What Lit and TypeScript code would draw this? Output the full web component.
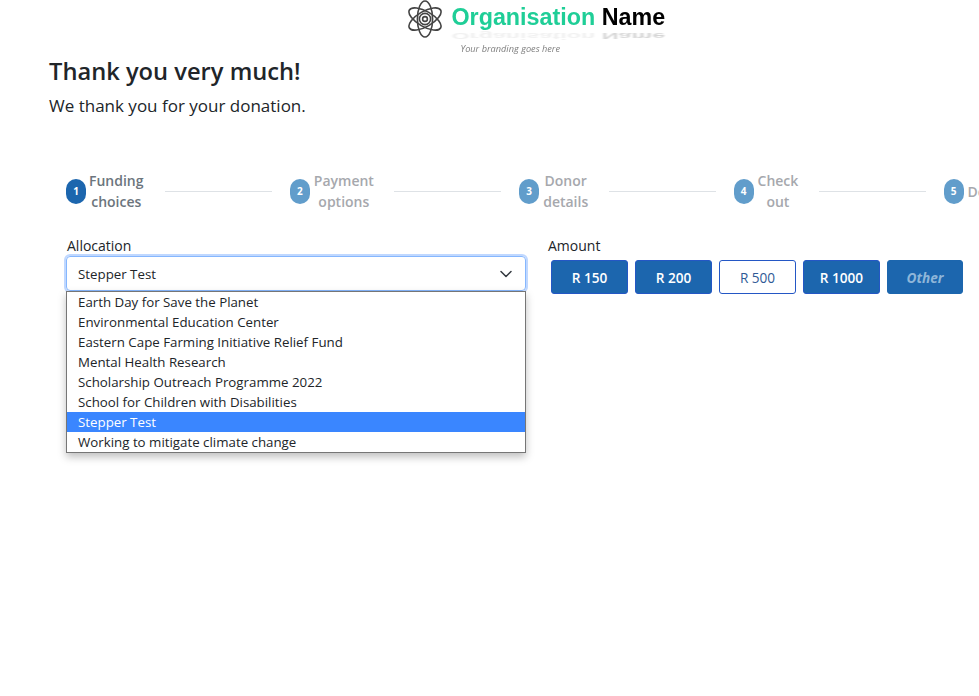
import { LitElement, html, css } from 'lit';
import { customElement } from 'lit/decorators.js';

const STEPS = [
  ['Funding', 'choices'],
  ['Payment', 'options'],
  ['Donor', 'details'],
  ['Check', 'out'],
  ['Done'],
];

const OPTIONS = [
  'Earth Day for Save the Planet',
  'Environmental Education Center',
  'Eastern Cape Farming Initiative Relief Fund',
  'Mental Health Research',
  'Scholarship Outreach Programme 2022',
  'School for Children with Disabilities',
  'Stepper Test',
  'Working to mitigate climate change',
];

const AMOUNTS = ['R 150', 'R 200', 'R 500', 'R 1000'];

@customElement('app-root')
export class AppRoot extends LitElement {
  static styles = css`
    :host {
      display: block;
      width: 979px;
      height: 696px;
      overflow: hidden;
      background: #fff;
      color: #212529;
      font-family: 'Open Sans', 'Noto Sans', sans-serif;
      font-size: 13.3px;
    }

    .brand {
      display: flex;
      justify-content: center;
      height: 56px;
      padding-left: 94px;
      box-sizing: border-box;
    }

    .logo {
      position: relative;
      display: flex;
      width: 258px;
      height: 56px;
      filter: blur(0.3px);
    }

    .atom {
      flex: none;
      width: 34px;
      height: 38px;
    }

    .wordmark {
      margin: 4px 0 0 10px;
      font-family: 'Liberation Sans', Arial, sans-serif;
      font-size: 23.3px;
      font-weight: 700;
      line-height: 27px;
      white-space: nowrap;
      color: #000;
    }

    .wordmark span {
      color: #1fce97;
    }

    .reflection {
      position: absolute;
      left: 34px;
      top: 18px;
      transform: scaleY(-0.4);
      opacity: 0.16;
      filter: blur(1px) grayscale(1);
    }

    .tagline {
      position: absolute;
      left: 53px;
      top: 42px;
      font-size: 9.2px;
      font-style: italic;
      line-height: 13px;
      color: #7f7f7f;
      white-space: nowrap;
    }

    .intro {
      padding-left: 49px;
    }

    h1 {
      margin: 0;
      font-size: 23.7px;
      font-weight: 600;
      line-height: 30px;
    }

    .intro p {
      margin: 6px 0 0;
      font-size: 17px;
      line-height: 27px;
    }

    .stepper {
      display: flex;
      align-items: center;
      margin: 51px 0 0 66px;
      width: 1000px;
    }

    .step {
      display: flex;
      align-items: center;
      flex: none;
    }

    .dot {
      flex: none;
      width: 20px;
      height: 25px;
      border-radius: 10px;
      display: flex;
      align-items: center;
      justify-content: center;
      background: #619dcb;
      color: #fff;
      font-size: 10px;
      font-weight: 700;
    }

    .step.active .dot {
      background: #1c66ae;
    }

    .label {
      margin: 0 -1px 0 4px;
      color: #a6a8ad;
      font-size: 14px;
      font-weight: 600;
      line-height: 21px;
      text-align: center;
    }

    .step.active .label {
      margin: 0 0 0 3px;
      color: #6c757d;
    }

    .rule {
      flex: none;
      width: 106.7px;
      height: 1px;
      margin: 0 18px 0 21.6px;
      background: #dee2e6;
    }

    .form {
      display: flex;
      margin: 23px 0 0 66px;
    }

    .allocation {
      width: 460px;
    }

    .field-label {
      display: block;
      padding-left: 1px;
      font-size: 14px;
      font-weight: 500;
      line-height: 21px;
    }

    .select-wrap {
      position: relative;
    }

    .select {
      display: flex;
      align-items: center;
      justify-content: space-between;
      box-sizing: border-box;
      height: 35px;
      padding: 0 11px;
      border: 1px solid #86b7fe;
      border-radius: 4px;
      box-shadow: 0 0 0 2px #c0d8ff;
    }

    .select svg {
      width: 16px;
      height: 16px;
      color: #343a40;
    }

    .menu {
      position: absolute;
      left: 0;
      right: 0;
      top: 35px;
      box-sizing: border-box;
      border: 1px solid #767676;
      background: #fff;
      box-shadow: 0 4px 8px rgba(0, 0, 0, 0.25);
    }

    .option {
      height: 20px;
      padding-left: 11px;
      line-height: 20px;
      white-space: nowrap;
    }

    .option.selected {
      background: #3a86ff;
      color: #fff;
    }

    .amount {
      margin-left: 21px;
    }

    .buttons {
      display: flex;
      gap: 7px;
      margin: 4px 0 0 4px;
    }

    .btn {
      box-sizing: border-box;
      width: 77px;
      height: 34px;
      padding: 0;
      border: 1px solid #2457c5;
      border-radius: 3px;
      background: #1c66ae;
      color: #fff;
      font: 600 13.6px 'Open Sans', 'Noto Sans', sans-serif;
    }

    .btn.outline {
      background: #fff;
      color: #2f5a96;
      font-weight: 500;
    }

    .btn.other {
      width: 76px;
      border-color: #1c66ae;
      color: #8fb6d9;
      font-style: italic;
      font-weight: 700;
    }
  `;

  render() {
    return html`
      <div class="brand">
        <div class="logo">
          <svg class="atom" viewBox="0 0 34 38" fill="none" stroke="#444" stroke-width="1.6">
            <circle cx="17" cy="19" r="2.4"></circle>
            <circle cx="17" cy="19" r="5.6"></circle>
            <ellipse cx="17" cy="19" rx="7.6" ry="18"></ellipse>
            <ellipse cx="17" cy="19" rx="7.6" ry="18" transform="rotate(60 17 19)"></ellipse>
            <ellipse cx="17" cy="19" rx="7.6" ry="18" transform="rotate(-60 17 19)"></ellipse>
          </svg>
          <div class="wordmark"><span>Organisation</span> Name</div>
          <div class="wordmark reflection" aria-hidden="true"><span>Organisation</span> Name</div>
          <div class="tagline">Your branding goes here</div>
        </div>
      </div>
      <div class="intro">
        <h1>Thank you very much!</h1>
        <p>We thank you for your donation.</p>
      </div>
      <div class="stepper">
        ${STEPS.map(([a, b], i) => html`
          <div class="step ${i === 0 ? 'active' : ''}">
            <div class="dot">${i + 1}</div>
            <div class="label">${a}${b ? html`<br />${b}` : ''}</div>
          </div>
          ${i < STEPS.length - 1 ? html`<div class="rule"></div>` : ''}
        `)}
      </div>
      <div class="form">
        <div class="allocation">
          <label class="field-label">Allocation</label>
          <div class="select-wrap">
            <div class="select">
              <span>Stepper Test</span>
              <svg viewBox="0 0 16 16" fill="none" stroke="currentColor" stroke-width="1.5" stroke-linecap="round" stroke-linejoin="round">
                <path d="M3 5.5l5 5 5-5"></path>
              </svg>
            </div>
            <div class="menu">
              ${OPTIONS.map(o => html`
                <div class="option ${o === 'Stepper Test' ? 'selected' : ''}">${o}</div>
              `)}
            </div>
          </div>
        </div>
        <div class="amount">
          <label class="field-label">Amount</label>
          <div class="buttons">
            ${AMOUNTS.map(a => html`
              <button class="btn ${a === 'R 500' ? 'outline' : ''}">${a}</button>
            `)}
            <button class="btn other">Other</button>
          </div>
        </div>
      </div>
    `;
  }
}
